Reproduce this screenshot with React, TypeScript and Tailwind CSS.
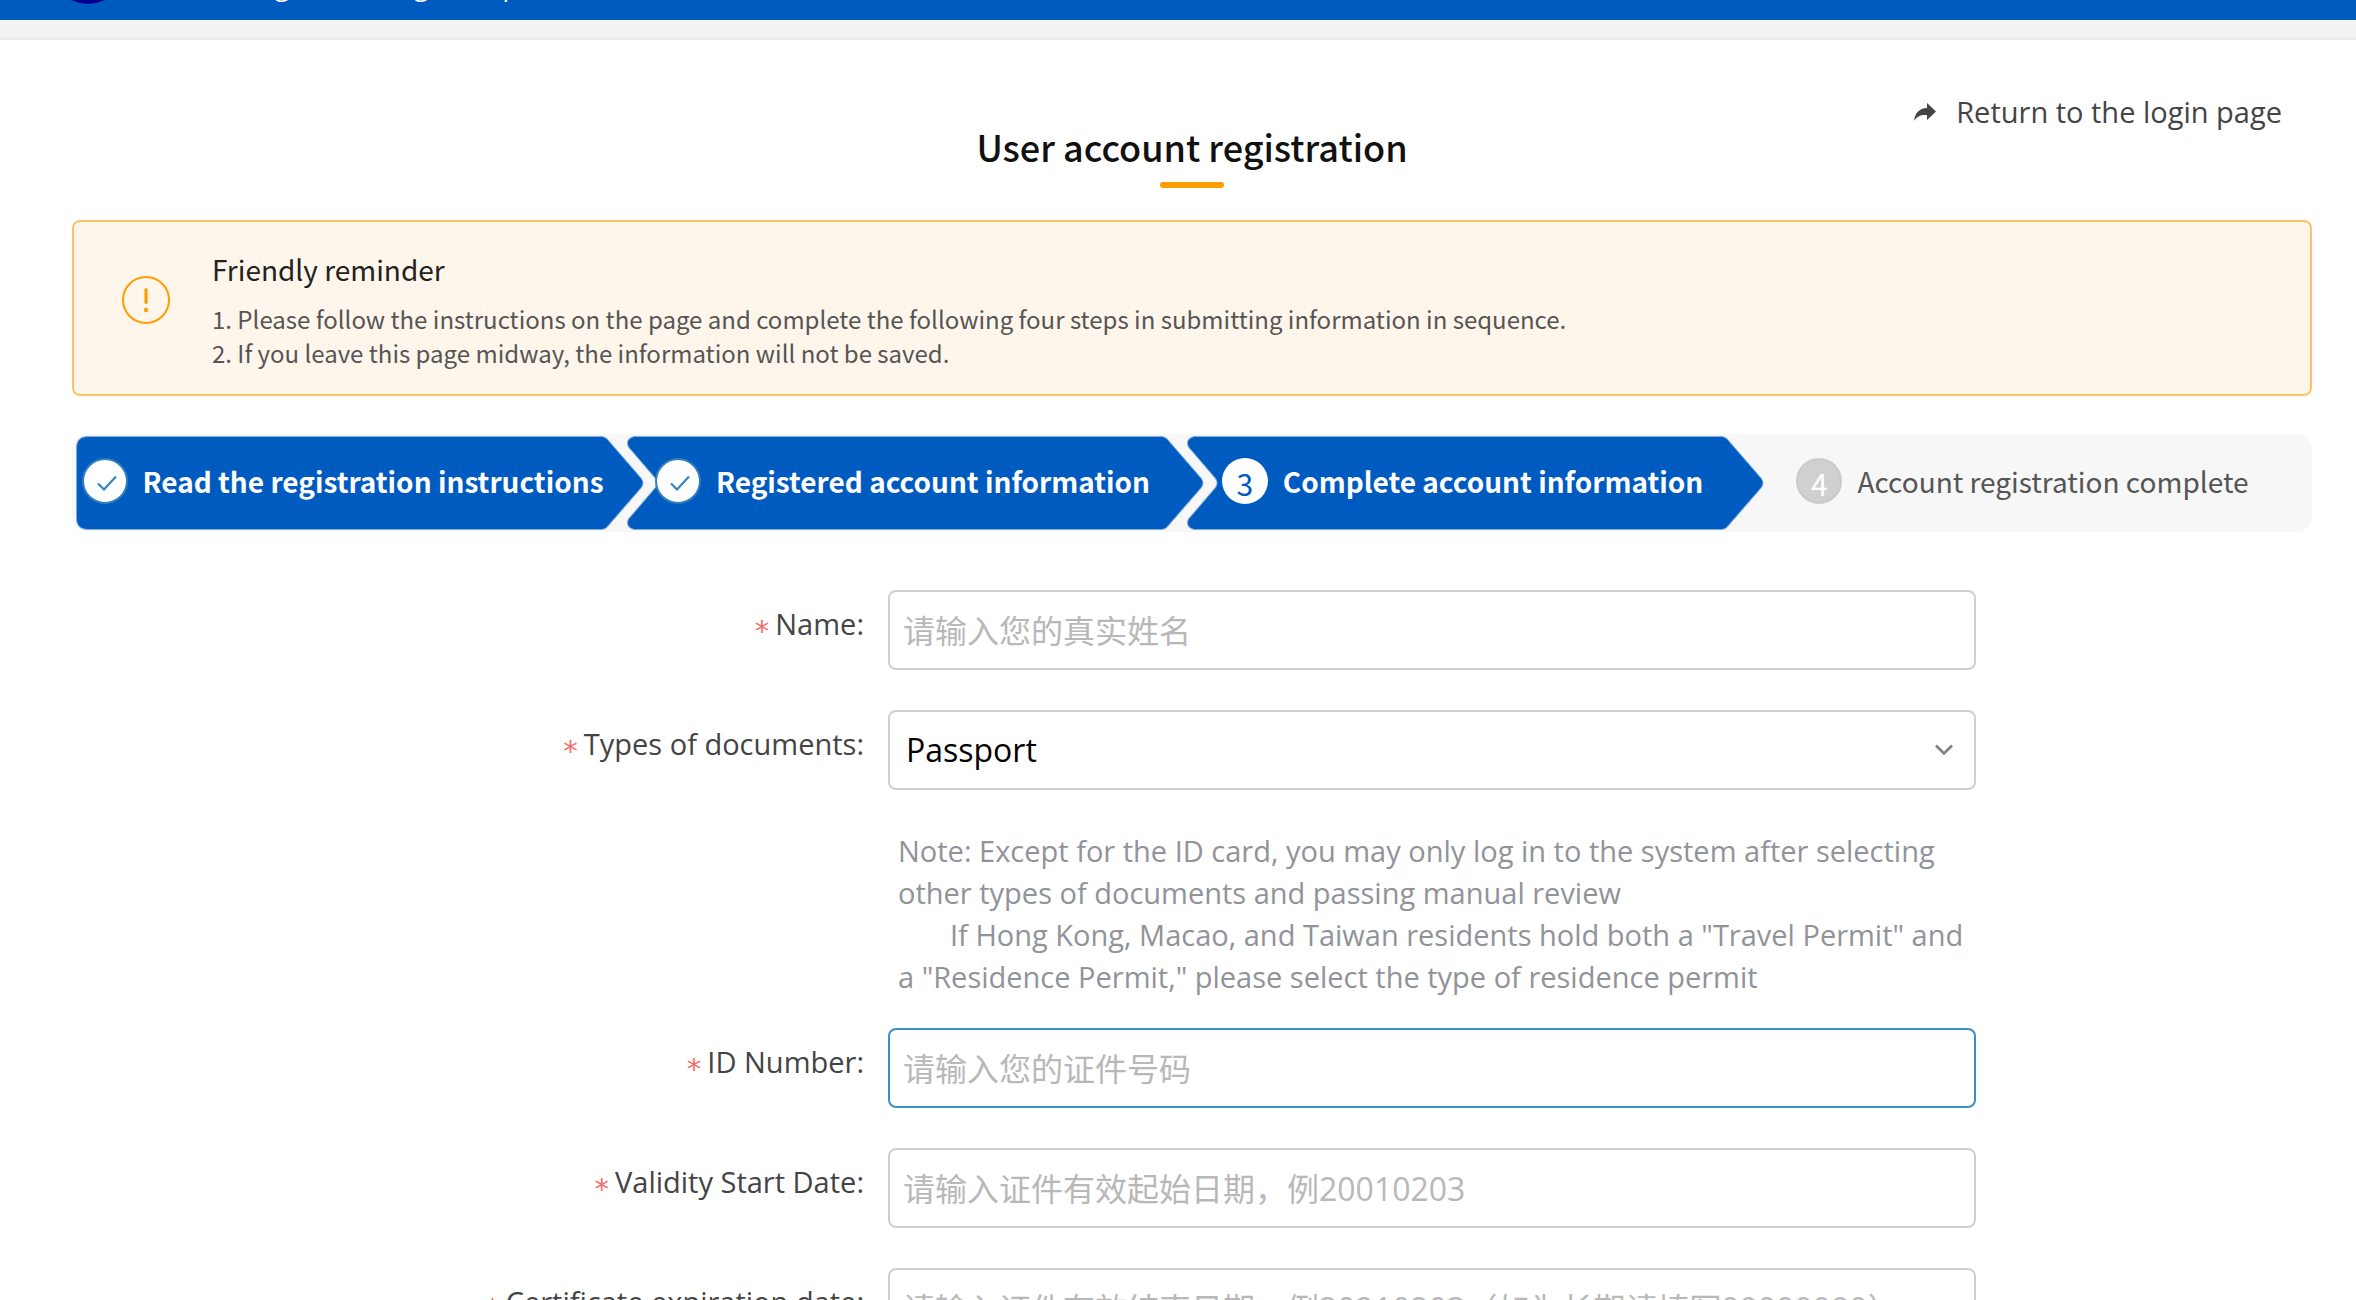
import React, { useState } from 'react';

type StepState = 'done' | 'current' | 'todo';

interface Step {
  label: string;
  state: StepState;
}

const STEPS: Step[] = [
  { label: 'Read the registration instructions', state: 'done' },
  { label: 'Registered account information', state: 'done' },
  { label: 'Complete account information', state: 'current' },
  { label: 'Account registration complete', state: 'todo' },
];

// Arrow shaped background of a step, the first one has no notch on the left
const StepArrow: React.FC<{ first: boolean }> = ({ first }) => (
  <svg
    className={first ? 'absolute top-[2px] left-1 w-[calc(100%+8px)] h-[94px]' : 'absolute top-[2px] -left-[5px] w-[calc(100%+17px)] h-[94px]'}
    viewBox={first ? '0 0 566 94' : '0 0 575 94'}
    preserveAspectRatio="none"
    aria-hidden="true"
  >
    {first ? (
      <path
        d="M12 0.5H523Q528 0.5 531 5L563 42Q567 47 563 52L531 89Q528 93.5 523 93.5H12Q0.5 93.5 0.5 82V12Q0.5 0.5 12 0.5Z"
        fill="#005bc0"
        stroke="#7faddf"
        strokeWidth="1"
      />
    ) : (
      <path
        d="M7 0.5H532Q537 0.5 540 5L572 42Q576 47 572 52L540 89Q537 93.5 532 93.5H7Q-2 91 1.5 83L28 52Q32 47 28 42L1.5 11Q-2 3 7 0.5Z"
        fill="#005bc0"
        stroke="#7faddf"
        strokeWidth="1"
      />
    )}
  </svg>
);

const StepBadge: React.FC<{ state: StepState; index: number }> = ({ state, index }) => {
  if (state === 'done') {
    return (
      <span className="flex size-[46px] shrink-0 items-center justify-center rounded-full border-2 border-[#2f7fbf] bg-white">
        <svg className="mt-1 ml-1 h-4 w-5" viewBox="0 0 20 16" fill="none" stroke="#3787bd" strokeWidth="2.2" aria-hidden="true">
          <path d="M1 8.5L7 14.5L19 1.5" />
        </svg>
      </span>
    );
  }
  return (
    <span
      className={
        state === 'current'
          ? 'flex size-[46px] shrink-0 items-center justify-center rounded-full bg-white pt-1 text-[30px] leading-none text-[#005bc0]'
          : 'flex size-[46px] shrink-0 items-center justify-center rounded-full border-2 border-[#cacaca] bg-[#d0d0d0] pt-1 text-[30px] leading-none text-white'
      }
    >
      {index}
    </span>
  );
};

const Steps: React.FC = () => (
  <ol className="mt-[38px] flex h-[98px] rounded-2xl bg-[#f7f7f7] font-['Noto_Sans_CJK_SC',sans-serif]">
    {STEPS.map((step, i) => (
      <li key={step.label} className="relative flex flex-1 items-center justify-center">
        {step.state !== 'todo' && <StepArrow first={i === 0} />}
        <div className="relative flex items-center gap-[15px] pr-[19px] pb-1">
          <StepBadge state={step.state} index={i + 1} />
          <span
            className={
              step.state === 'todo'
                ? 'text-[28px] leading-10 whitespace-nowrap text-[#555]'
                : 'text-[28px] leading-10 font-bold whitespace-nowrap text-white'
            }
          >
            {step.label}
          </span>
        </div>
      </li>
    ))}
  </ol>
);

interface FieldProps {
  id: string;
  label: string;
  children: React.ReactNode;
}

const Field: React.FC<FieldProps> = ({ id, label, children }) => (
  <div className="grid grid-cols-[816fr_1088fr_336fr]">
    <label htmlFor={id} className="pt-3 pr-6 text-right text-[29px] leading-[44px] whitespace-nowrap text-[#444]">
      <span className="mr-[6px] inline-block pt-2 align-middle font-['DejaVu_Sans',sans-serif] leading-9 text-[#f56c6c]">*</span>
      {label}:
    </label>
    {children}
  </div>
);

interface TextFieldProps {
  id: string;
  label: string;
  placeholder: string;
  active?: boolean;
}

const TextField: React.FC<TextFieldProps> = ({ id, label, placeholder, active }) => {
  const [value, setValue] = useState('');
  return (
    <Field id={id} label={label}>
      <input
        id={id}
        type="text"
        required
        value={value}
        onChange={(e) => setValue(e.target.value)}
        placeholder={placeholder}
        className={
          active
            ? 'h-20 w-full rounded-lg border-2 border-[#3b8fc9] bg-white px-[13px] text-[32px] text-black outline-none placeholder:text-[#b8b8b8]'
            : 'h-20 w-full rounded-lg border-2 border-[#cfcfcf] bg-white px-[13px] text-[32px] text-black outline-none placeholder:text-[#b8b8b8]'
        }
      />
    </Field>
  );
};

const App: React.FC = () => {
  const [docType, setDocType] = useState('Passport');

  return (
    <div className="bg-white font-['Open_Sans','Noto_Sans_CJK_SC',sans-serif] text-[#444]">
      <header className="flex h-5 items-end gap-[18px] overflow-hidden bg-[#005bc0] pl-[50px] text-white">
        <span className="mb-4 size-[76px] shrink-0 rounded-full bg-[#000090]" />
        <span className="mb-2 pb-2 text-[26px] leading-9 whitespace-nowrap">Online filing and linking lookup</span>
      </header>
      <div className="h-5 bg-linear-to-b from-[#f3f3f3] from-80% to-[#e8e8e8]" />

      <main className="pr-11 pl-[72px]">
        <div className="flex justify-end pt-[50px] pr-[30px]">
          <a href="#login" className="flex items-center gap-5 text-[29px] leading-[44px] text-[#444]">
            <svg className="h-[18px] w-[22px]" viewBox="0 0 22 18" fill="#444" aria-hidden="true">
              <path d="M13 0L22 8.5L13 17V12C7 11.5 3 13 0 18C1 10 5 5.500 13 5Z" />
            </svg>
            Return to the login page
          </a>
        </div>

        <div className="-mt-3 flex flex-col items-center">
          <h1 className="font-['Noto_Sans_CJK_SC',sans-serif] text-[36px] leading-[48px] font-medium text-[#111]">
            User account registration
          </h1>
          <span className="mt-3 h-[6px] w-16 rounded-full bg-[#ff9d00]" />
        </div>

        <section className="mt-8 flex h-44 rounded-lg border-2 border-[#ffc163] bg-[#fff6eb] pt-[26px] pl-12 font-['Noto_Sans_CJK_SC',sans-serif]">
          <svg className="mt-7 mr-[42px] size-12 shrink-0" viewBox="0 0 48 48" fill="none" stroke="#ff9d00" aria-hidden="true">
            <circle cx="24" cy="24" r="23" strokeWidth="2" />
            <path d="M24 13.500V26.500" strokeWidth="3.200" strokeLinecap="round" />
            <circle cx="24" cy="34" r="2.200" fill="#ff9d00" stroke="none" />
          </svg>
          <div>
            <h2 className="text-[28px] leading-[42px] text-[#222]">Friendly reminder</h2>
            <div className="mt-3 text-[24px] leading-[34px] text-[#555]">
              <p>1. Please follow the instructions on the page and complete the following four steps in submitting information in sequence.</p>
              <p>2. If you leave this page midway, the information will not be saved.</p>
            </div>
          </div>
        </section>

        <Steps />

        <form className="mt-[58px] flex flex-col gap-10">
          <TextField id="name" label="Name" placeholder="请输入您的真实姓名" />

          <div>
            <Field id="doc-type" label="Types of documents">
              <div className="relative">
                <select
                  id="doc-type"
                  value={docType}
                  onChange={(e) => setDocType(e.target.value)}
                  className="h-20 w-full appearance-none rounded-lg border-2 border-[#cfcfcf] bg-white px-4 text-[32px] text-black outline-none"
                >
                  <option value="Passport">Passport</option>
                  <option value="Residence Permit">Residence Permit</option>
                  <option value="Travel Permit">Travel Permit</option>
                </select>
                <svg
                  className="pointer-events-none absolute top-[34px] right-[23px] h-3 w-[18px]"
                  viewBox="0 0 18 12"
                  fill="none"
                  stroke="#808080"
                  strokeWidth="2.5"
                  aria-hidden="true"
                >
                  <path d="M1 1.500L9 9.500L17 1.500" />
                </svg>
              </div>
            </Field>
            <div className="mt-10 -mb-[10px] grid grid-cols-[816fr_1088fr_336fr]">
              <div className="col-start-2 pl-[10px] text-[29px] leading-[42px] text-[#909399]">
                <p>
                  Note: Except for the ID card, you may only log in to the system after selecting
                  <br />
                  other types of documents and passing manual review
                </p>
                <p className="indent-[52px]">
                  If Hong Kong, Macao, and Taiwan residents hold both a "Travel Permit" and
                  <br />
                  a "Residence Permit," please select the type of residence permit
                </p>
              </div>
            </div>
          </div>

          <TextField id="id-number" label="ID Number" placeholder="请输入您的证件号码" active />
          <TextField id="valid-from" label="Validity Start Date" placeholder="请输入证件有效起始日期，例20010203" />
          <TextField
            id="valid-to"
            label="Certificate expiration date"
            placeholder="请输入证件有效结束日期，例20210203（如为长期请填写99999999）"
          />
        </form>
      </main>
    </div>
  );
};

export default App;
